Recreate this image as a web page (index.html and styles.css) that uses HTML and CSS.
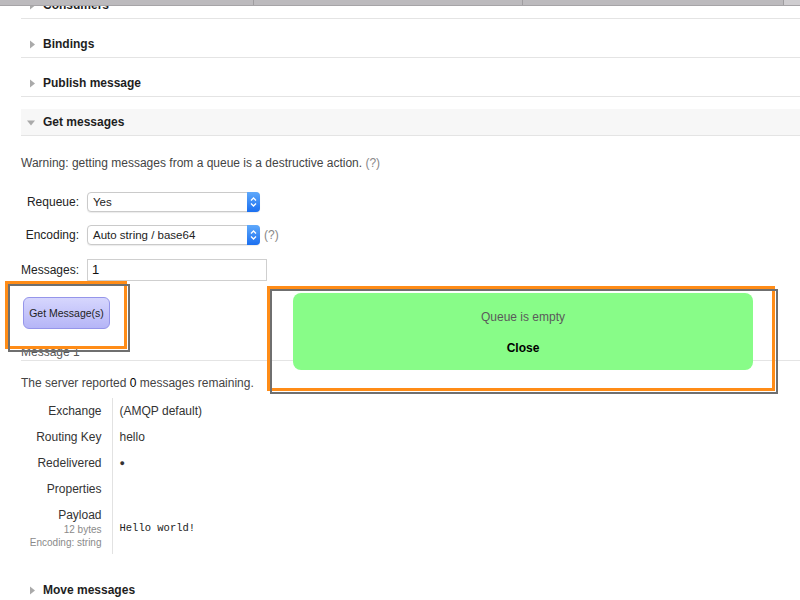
FILE: index.html
```html
<!DOCTYPE html>
<html>
<head>
<meta charset="utf-8">
<title>Get messages</title>
<link rel="stylesheet" href="styles.css">
</head>
<body>
<div class="page">
  <div class="tabbar">
    <span class="tab tab-a"></span>
    <span class="tab tab-b"></span>
    <span class="tab tab-c"></span>
    <span class="tab tab-d"></span>
  </div>

  <div class="content">
    <section class="section">
      <h2 class="sh"><svg class="tri" viewBox="0 0 9 9"><path d="M3 0.5 L8 4.5 L3 8.5 Z"/></svg>Consumers</h2>
    </section>
    <section class="section">
      <h2 class="sh"><svg class="tri" viewBox="0 0 9 9"><path d="M3 0.5 L8 4.5 L3 8.5 Z"/></svg>Bindings</h2>
    </section>
    <section class="section">
      <h2 class="sh"><svg class="tri" viewBox="0 0 9 9"><path d="M3 0.5 L8 4.5 L3 8.5 Z"/></svg>Publish message</h2>
    </section>
    <section class="section open">
      <h2 class="sh"><svg class="tri" viewBox="0 0 9 9"><path d="M0 2.5 L8 2.5 L4 7.5 Z"/></svg>Get messages</h2>
      <div class="body">
        <p class="warn">Warning: getting messages from a queue is a destructive action. <span class="help">(?)</span></p>
        <div class="form">
          <label class="flabel">Requeue:</label>
          <div class="fctl">
            <div class="select"><span class="sel-text">Yes</span><span class="stepper"><svg viewBox="0 0 13 20"><path d="M4 8.5 L6.5 6 L9 8.5 M4 11.5 L6.5 14 L9 11.5"/></svg></span></div>
          </div>
          <label class="flabel">Encoding:</label>
          <div class="fctl">
            <div class="select"><span class="sel-text">Auto string / base64</span><span class="stepper"><svg viewBox="0 0 13 20"><path d="M4 8.5 L6.5 6 L9 8.5 M4 11.5 L6.5 14 L9 11.5"/></svg></span></div>
            <span class="help">(?)</span>
          </div>
          <label class="flabel flabel-last">Messages:</label>
          <div class="fctl fctl-last">
            <div class="input">1</div>
          </div>
        </div>
        <button class="btn">Get Message(s)</button>
        <h3 class="msg-title">Message 1</h3>
        <p class="remaining">The server reported <b class="num">0</b> messages remaining.</p>
        <table class="props">
          <tr><th>Exchange</th><td>(AMQP default)</td></tr>
          <tr><th>Routing Key</th><td>hello</td></tr>
          <tr><th>Redelivered</th><td><span class="dot">&#9679;</span></td></tr>
          <tr><th>Properties</th><td></td></tr>
          <tr class="payload"><th>Payload<span class="sub">12 bytes</span><span class="sub">Encoding: string</span></th><td><pre class="code">Hello world!</pre></td></tr>
        </table>
      </div>
    </section>
    <section class="section">
      <h2 class="sh"><svg class="tri" viewBox="0 0 9 9"><path d="M3 0.5 L8 4.5 L3 8.5 Z"/></svg>Move messages</h2>
    </section>
  </div>

  <div class="callout callout-btn"></div>
  <div class="notice">
    <p class="notice-text">Queue is empty</p>
    <p class="notice-close">Close</p>
  </div>
  <div class="callout callout-notice"></div>
</div>
</body>
</html>
```

FILE: styles.css
```css
* { box-sizing: border-box; }
html, body { margin: 0; padding: 0; background: #fff; }
body {
  font-family: "Liberation Sans", Arial, sans-serif;
  font-size: 12px;
  color: #444;
  width: 800px;
  height: 600px;
  overflow: hidden;
}
.page { position: relative; width: 800px; height: 600px; overflow: hidden; }

/* fixed header strip over scrolled content */
.tabbar {
  position: absolute;
  top: 0; left: 0;
  width: 800px;
  height: 6px;
  display: flex;
  background: #bcbabd;
  border-bottom: 1px solid #a6a4a7;
  z-index: 5;
}
.tab { height: 100%; }
.tab-a { width: 253px; }
.tab-b { width: 269px; border-left: 1px solid #9f9da0; }
.tab-c { width: 261px; border-left: 1px solid #9f9da0; }
.tab-d { flex: 1; border-left: 1px solid #9f9da0; background: #cfcdd0; }

.content { margin-top: -20px; padding-left: 21px; }

.sh {
  margin: 12px 0 0 0;
  padding: 5px 0 5px 6px;
  line-height: 16px;
  font-size: 12px;
  font-weight: bold;
  color: #1e1e1e;
  border-bottom: 1px solid #e4e4e4;
  display: flex;
  align-items: center;
}
.open .sh { background: #f7f7f7; }
.tri { width: 9px; height: 9px; margin-right: 7px; fill: #aaa; flex: none; }

.body { padding-bottom: 11px; }

.warn { margin: 19px 0 0 0; line-height: 16px; color: #444; }
.help { color: #888; }

.form {
  margin-top: 21px;
  display: grid;
  grid-template-columns: 58px auto;
  column-gap: 8px;
  row-gap: 13px;
  align-items: center;
}
.flabel-last, .fctl-last { margin-top: 1px; }
.flabel { text-align: right; color: #222; line-height: 16px; }
.fctl { display: flex; align-items: center; gap: 4px; }

.select {
  position: relative;
  width: 173px;
  height: 20px;
  border: 1px solid #cacaca;
  border-radius: 4px;
  background: #fff;
  box-shadow: 0 1px 1px rgba(0,0,0,0.08);
  display: flex;
  align-items: center;
  padding-left: 5px;
  color: #222;
  font-size: 11.5px;
}
.sel-text { flex: 1; }
.stepper {
  width: 13px;
  height: 20px;
  margin: -1px -1px -1px 0;
  border-radius: 0 4px 4px 0;
  background: linear-gradient(#5fa9fb, #1b6ff0);
  display: flex;
}
.stepper svg { width: 13px; height: 20px; fill: none; stroke: #fff; stroke-width: 1.3; }

.input {
  width: 180px;
  height: 22px;
  border: 1px solid #cfcfcf;
  background: #fff;
  padding-left: 4px;
  line-height: 20px;
  font-size: 13px;
  color: #111;
}

.btn {
  display: block;
  margin: 16px 0 0 2px;
  width: 87px;
  height: 32px;
  border: 1px solid #9595ea;
  border-radius: 6px;
  background: linear-gradient(#d6d6fd, #b5b5f7);
  font-family: "Liberation Sans", Arial, sans-serif;
  font-size: 10.5px;
  color: #1e1e1e;
  padding: 0;
}

.msg-title {
  margin: 15px 0 0 0;
  font-size: 12px;
  font-weight: normal;
  line-height: 16px;
  color: #555;
  border-bottom: 1px solid #e4e4e4;
}

.remaining { margin: 14px 0 0 0; line-height: 16px; color: #444; }
.num { font-weight: normal; color: #000; }

.props { margin-top: 7px; border-collapse: collapse; }
.props th {
  width: 91px;
  text-align: right;
  font-weight: normal;
  color: #333;
  padding: 5px 10px 5px 0;
  line-height: 16px;
  border-right: 1px solid #e2e2e2;
  vertical-align: top;
}
.props td { padding: 5px 0 5px 7px; line-height: 16px; color: #333; vertical-align: middle; }
.props tr { height: 26px; }
.sub { display: block; font-size: 10px; line-height: 13px; color: #8a8a8a; }
.dot { display: inline-block; font-size: 9px; line-height: 16px; vertical-align: top; color: #333; }
.code { margin: 0; font-family: "Liberation Mono", "Courier New", monospace; font-size: 10.5px; color: #222; }

/* annotation overlays */
.callout {
  position: absolute;
  border: 3px solid #ff8c17;
  z-index: 3;
}
.callout::after {
  content: "";
  position: absolute;
  top: 0; left: 0; right: -6px; bottom: -6px;
  border: 2px solid #6f6f6f;
  z-index: -1;
}
.callout-btn { left: 5px; top: 281px; width: 122px; height: 68px; }
.callout-notice { left: 267px; top: 286px; width: 508px; height: 105px; }

.notice {
  position: absolute;
  left: 293px;
  top: 293px;
  width: 460px;
  height: 77px;
  background: #88fc88;
  border-radius: 8px;
  text-align: center;
  z-index: 2;
}
.notice-text { margin: 16px 0 0 0; line-height: 16px; color: #5a5a5a; }
.notice-close { margin: 15px 0 0 0; line-height: 16px; font-weight: bold; color: #000; }
```
